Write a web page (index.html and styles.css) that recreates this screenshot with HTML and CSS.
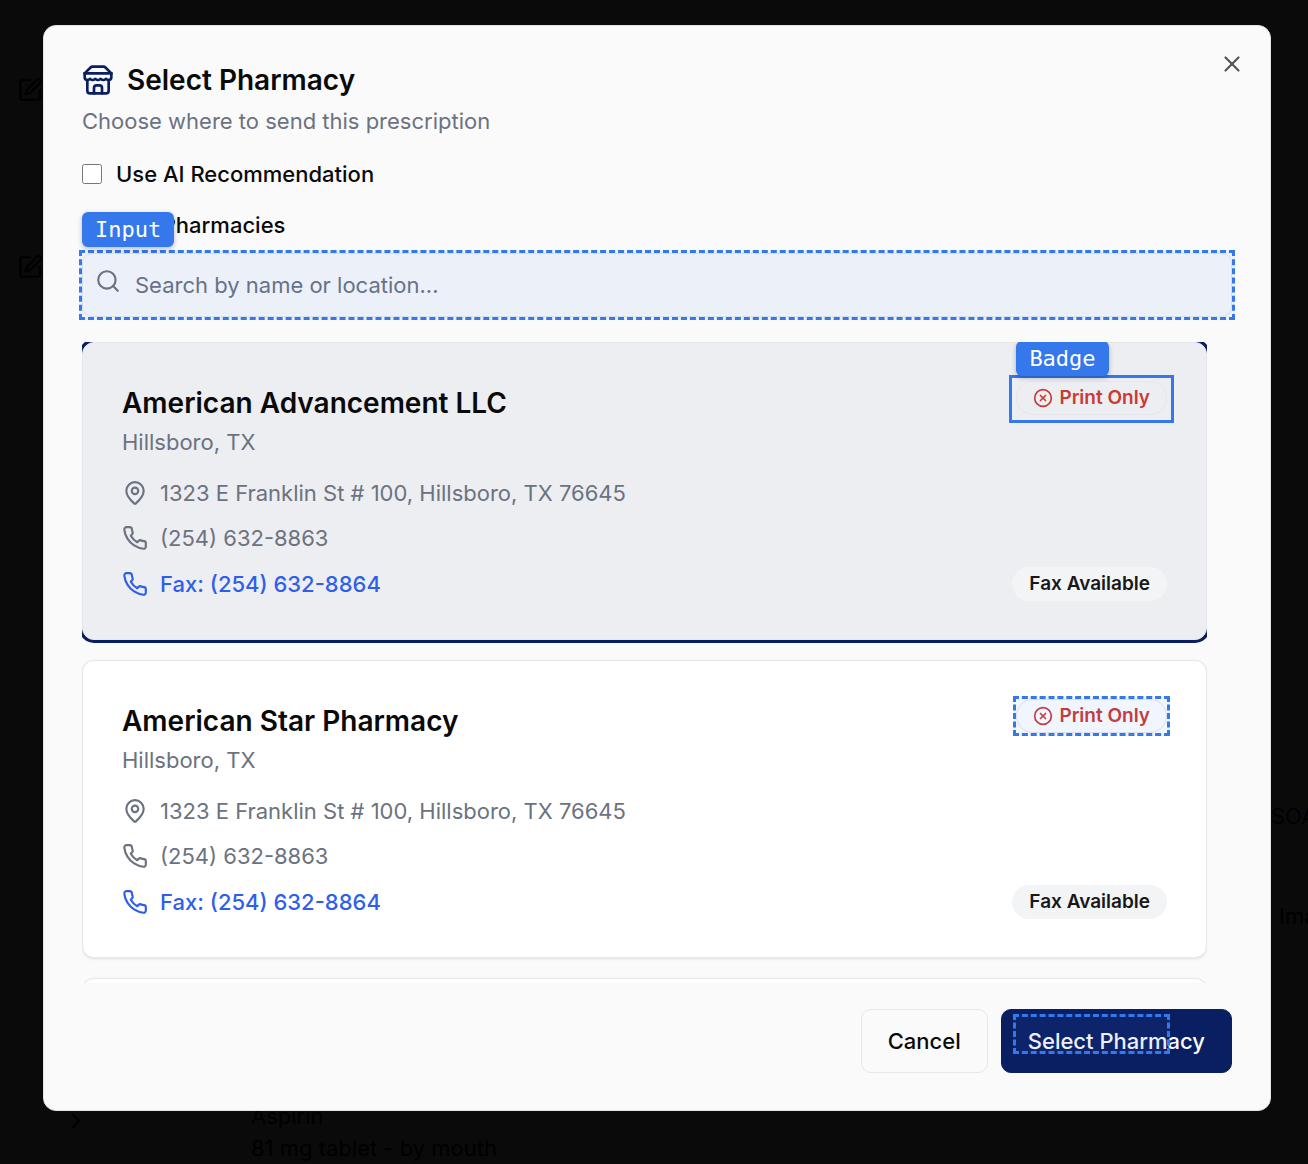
FILE: index.html
```html
<!DOCTYPE html>
<html lang="en">
<head>
<meta charset="utf-8">
<meta name="viewport" content="width=device-width, initial-scale=1">
<title>Select Pharmacy</title>
<link rel="stylesheet" href="styles.css">
</head>
<body>
<svg class="sprite" aria-hidden="true">
  <symbol id="i-store" viewBox="0 0 24 24"><path d="m2 7 4.41-4.41A2 2 0 0 1 7.83 2h8.34a2 2 0 0 1 1.42.59L22 7"/><path d="M4 12v8a2 2 0 0 0 2 2h12a2 2 0 0 0 2-2v-8"/><path d="M15 22v-4a2 2 0 0 0-2-2h-2a2 2 0 0 0-2 2v4"/><path d="M2 7h20"/><path d="M22 7v3a2 2 0 0 1-2 2a2.7 2.7 0 0 1-1.59-.63.7.7 0 0 0-.82 0A2.7 2.7 0 0 1 16 12a2.7 2.7 0 0 1-1.59-.63.7.7 0 0 0-.82 0A2.7 2.7 0 0 1 12 12a2.7 2.7 0 0 1-1.59-.63.7.7 0 0 0-.82 0A2.7 2.7 0 0 1 8 12a2.7 2.7 0 0 1-1.59-.63.7.7 0 0 0-.82 0A2.7 2.7 0 0 1 4 12a2 2 0 0 1-2-2V7"/></symbol>
  <symbol id="i-x" viewBox="0 0 24 24"><path d="M18 6 6 18"/><path d="m6 6 12 12"/></symbol>
  <symbol id="i-search" viewBox="0 0 24 24"><circle cx="11" cy="11" r="8"/><path d="m21 21-4.3-4.3"/></symbol>
  <symbol id="i-pin" viewBox="0 0 24 24"><path d="M20 10c0 4.993-5.539 10.193-7.399 11.799a1 1 0 0 1-1.202 0C9.539 20.193 4 14.993 4 10a8 8 0 0 1 16 0"/><circle cx="12" cy="10" r="3"/></symbol>
  <symbol id="i-phone" viewBox="0 0 24 24"><path d="M22 16.92v3a2 2 0 0 1-2.18 2 19.79 19.79 0 0 1-8.63-3.07 19.5 19.5 0 0 1-6-6 19.79 19.79 0 0 1-3.07-8.67A2 2 0 0 1 4.11 2h3a2 2 0 0 1 2 1.72 12.84 12.84 0 0 0 .7 2.81 2 2 0 0 1-.45 2.11L8.09 9.91a16 16 0 0 0 6 6l1.27-1.27a2 2 0 0 1 2.11-.45 12.84 12.84 0 0 0 2.81.7A2 2 0 0 1 22 16.92z"/></symbol>
  <symbol id="i-x-circle" viewBox="0 0 24 24"><circle cx="12" cy="12" r="10"/><path d="m15 9-6 6"/><path d="m9 9 6 6"/></symbol>
  <symbol id="i-edit" viewBox="0 0 24 24"><path d="M12 3H5a2 2 0 0 0-2 2v14a2 2 0 0 0 2 2h14a2 2 0 0 0 2-2v-7"/><path d="M18.375 2.625a1 1 0 0 1 3 3l-9.013 9.014a2 2 0 0 1-.853.505l-2.873.84a.5.5 0 0 1-.62-.62l.84-2.873a2 2 0 0 1 .506-.852z"/></symbol>
  <symbol id="i-chevron" viewBox="0 0 24 24"><path d="m9 18 6-6-6-6"/></symbol>
</svg>

<main class="chart" aria-hidden="true">
  <div class="chart-tools">
    <svg class="icon"><use href="#i-edit"/></svg>
    <svg class="icon"><use href="#i-edit"/></svg>
    <svg class="icon chart-expand"><use href="#i-chevron"/></svg>
  </div>
  <div class="chart-meds">
    <p>Aspirin</p>
    <p>81 mg tablet - by mouth</p>
  </div>
  <div class="chart-tabs">
    <p class="chart-note">SOAP</p>
    <p class="chart-imaging">Imaging</p>
  </div>
</main>

<div class="overlay">
  <section class="dialog" role="dialog" aria-modal="true" aria-labelledby="dialog-title">
    <button class="close" type="button" aria-label="Close"><svg class="icon"><use href="#i-x"/></svg></button>

    <header class="dialog-head">
      <h1 class="dialog-title" id="dialog-title"><svg class="icon icon-lg"><use href="#i-store"/></svg>Select Pharmacy</h1>
      <p class="dialog-text">Choose where to send this prescription</p>
    </header>

    <label class="check"><input type="checkbox">Use AI Recommendation</label>

    <div class="field">
      <label class="field-label" for="search">Search Pharmacies</label>
      <div class="search">
        <svg class="icon search-icon"><use href="#i-search"/></svg>
        <input class="search-input" id="search" type="text" placeholder="Search by name or location...">
        <span class="outline outline-dashed"></span>
        <span class="tag tag-input">Input</span>
      </div>
    </div>

    <div class="list">
      <article class="card card-selected">
        <div class="card-head">
          <div>
            <h2 class="card-title">American Advancement LLC</h2>
            <p class="card-place">Hillsboro, TX</p>
          </div>
          <div class="badge badge-outline">
            <svg class="icon icon-sm"><use href="#i-x-circle"/></svg>Print Only
            <span class="outline outline-solid"></span>
            <span class="tag tag-badge">Badge</span>
          </div>
        </div>
        <div class="card-body">
          <p class="row"><svg class="icon"><use href="#i-pin"/></svg>1323 E Franklin St # 100, Hillsboro, TX 76645</p>
          <p class="row"><svg class="icon"><use href="#i-phone"/></svg>(254) 632-8863</p>
          <div class="row row-fax"><svg class="icon"><use href="#i-phone"/></svg>Fax: (254) 632-8864<span class="badge badge-fill">Fax Available</span></div>
        </div>
      </article>

      <article class="card">
        <div class="card-head">
          <div>
            <h2 class="card-title">American Star Pharmacy</h2>
            <p class="card-place">Hillsboro, TX</p>
          </div>
          <div class="badge badge-outline">
            <svg class="icon icon-sm"><use href="#i-x-circle"/></svg>Print Only
            <span class="outline outline-dashed outline-badge"></span>
          </div>
        </div>
        <div class="card-body">
          <p class="row"><svg class="icon"><use href="#i-pin"/></svg>1323 E Franklin St # 100, Hillsboro, TX 76645</p>
          <p class="row"><svg class="icon"><use href="#i-phone"/></svg>(254) 632-8863</p>
          <div class="row row-fax"><svg class="icon"><use href="#i-phone"/></svg>Fax: (254) 632-8864<span class="badge badge-fill">Fax Available</span></div>
        </div>
      </article>

      <article class="card"></article>
    </div>

    <footer class="actions">
      <button class="btn" type="button">Cancel</button>
      <button class="btn btn-primary" type="button">Select Pharmacy<span class="outline outline-dashed outline-action"></span></button>
    </footer>
  </section>
</div>
</body>
</html>
```

FILE: styles.css
```css
:root {
  --navy: #0a1f61;
  --muted: #6b7280;
  --line: #e5e7eb;
  --mark: #3478ec;
}

* { box-sizing: border-box; }

body {
  margin: 0;
  height: 100vh;
  overflow: hidden;
  background: #0a0a0a;
  color: #0a0a0a;
  font: 400 22px/32px Inter, "Liberation Sans", sans-serif;
}

h1, h2, p { margin: 0; }

button, input { font: inherit; color: inherit; }

.sprite { position: absolute; width: 0; height: 0; }

.icon {
  flex: none;
  width: 26px;
  height: 26px;
  fill: none;
  stroke: currentColor;
  stroke-width: 2;
  stroke-linecap: round;
  stroke-linejoin: round;
}
.icon-lg { width: 32px; height: 32px; color: var(--navy); }
.icon-sm { width: 20px; height: 20px; }

/* Patient chart behind the dialog */
.chart {
  display: grid;
  grid-template-columns: 251px 1fr 37px;
  height: 100vh;
  overflow: hidden;
  color: #000;
}
.chart-tools {
  display: flex;
  flex-direction: column;
  gap: 151px;
  padding: 77px 17px 30px;
}
.chart-expand { margin: auto 0 0 46px; }
.chart-meds { align-self: end; }
.chart-tabs {
  display: flex;
  flex-direction: column;
  gap: 68px;
  padding-top: 800px;
}
.chart-note { color: #000006; }
.chart-imaging { padding-left: 8px; }

/* Dialog */
.overlay {
  position: fixed;
  inset: 0;
  display: flex;
  padding: 25px 37px 53px 43px;
}
.dialog {
  position: relative;
  flex: 1;
  display: flex;
  flex-direction: column;
  min-width: 0;
  padding: 38px 38px 37px;
  border: 1px solid #e5e5e5;
  border-radius: 13px;
  background: #fafafa;
}
.close {
  position: absolute;
  top: 25px;
  right: 25px;
  display: flex;
  padding: 0;
  border: 0;
  background: none;
  color: #545454;
}
.dialog-title {
  display: flex;
  align-items: center;
  gap: 13px;
  font-size: 28px;
  font-weight: 600;
  line-height: 32px;
}
.dialog-text { margin-top: 9px; color: var(--muted); }

.check {
  display: flex;
  align-items: center;
  gap: 14px;
  margin-top: 21px;
  font-weight: 500;
}
.check input { width: 20px; height: 20px; margin: 0; }

.field { margin-top: 19px; }
.field-label { display: block; font-weight: 500; }
.search { position: relative; margin-top: 12px; }
.search-icon {
  position: absolute;
  top: 15px;
  left: 13px;
  z-index: 1;
  color: var(--muted);
}
.search-input {
  display: block;
  width: 100%;
  height: 64px;
  padding: 0 16px 0 52px;
  border: 1px solid var(--line);
  border-radius: 10px;
  background: #fafafa;
}
.search-input::placeholder { color: var(--muted); opacity: 1; }

/* Component markers */
.outline {
  position: absolute;
  inset: -3px;
  border: 3px solid var(--mark);
  pointer-events: none;
}
.outline-dashed { border-style: dashed; background: rgb(52 120 236 / 7%); }
.outline-badge { inset: -4px; }
.outline-solid { inset: -7px -8px -9px; }
.tag {
  position: absolute;
  padding: 0 13px;
  border-radius: 6px;
  background: var(--mark);
  box-shadow: 0 2px 5px rgb(0 0 0 / 25%);
  color: #fff;
  font: 400 22px/35px "DejaVu Sans Mono", monospace;
}
.tag-input { left: 0; bottom: 70px; }
.tag-badge { left: -1px; bottom: 38px; }

/* Pharmacy list */
.list {
  flex: 1;
  display: flex;
  flex-direction: column;
  gap: 20px;
  min-height: 0;
  margin: 25px 25px 0 0;
  overflow: hidden;
}
.card {
  flex: none;
  min-height: 298px;
  padding: 38px 39px;
  border: 1px solid var(--line);
  border-radius: 12px;
  background: #fff;
  box-shadow: 0 1px 3px rgb(0 0 0 / 10%);
}
.card-selected {
  background: #edeef2;
  box-shadow: 0 0 0 3px var(--navy);
}
.card-head {
  display: flex;
  justify-content: space-between;
  align-items: flex-start;
}
.card-title { font-size: 28px; font-weight: 600; line-height: 44px; }
.card-place { color: var(--muted); line-height: 34px; }
.card-body {
  display: grid;
  gap: 13px;
  margin-top: 18px;
}
.row {
  display: flex;
  align-items: center;
  gap: 12px;
  color: var(--muted);
}
.row-fax { color: #2f5fea; font-weight: 500; }

.badge {
  position: relative;
  display: flex;
  align-items: center;
  gap: 6px;
  height: 34px;
  padding: 0 16px;
  border: 1px solid transparent;
  border-radius: 17px;
  font-size: 19px;
  font-weight: 600;
  line-height: 24px;
}
.badge-outline { border-color: var(--line); color: #cb3a35; }
.badge-fill { margin-left: auto; background: #f3f4f6; color: #18181b; }

.actions {
  display: flex;
  justify-content: flex-end;
  gap: 13px;
  margin-top: 26px;
}
.btn {
  position: relative;
  height: 64px;
  padding: 0 26px;
  border: 1px solid var(--line);
  border-radius: 10px;
  background: #fafafa;
  font-weight: 500;
}
.btn-primary { border-color: var(--navy); background: var(--navy); color: #fafafa; }
.outline-action { inset: 4px 61px 18px 11px; }
```
